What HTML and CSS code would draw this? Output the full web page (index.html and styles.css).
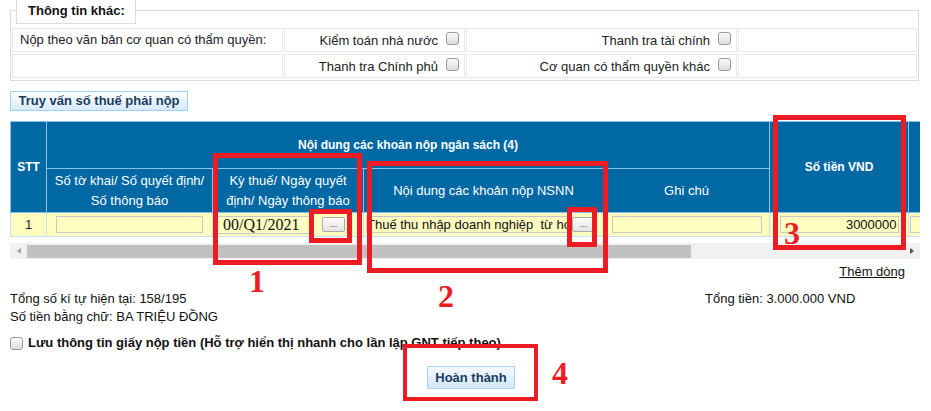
FILE: index.html
```html
<!DOCTYPE html>
<html lang="vi">
<head>
<meta charset="utf-8">
<title>Giấy nộp tiền</title>
<link rel="stylesheet" href="styles.css">
</head>
<body>
<div class="page">
  <fieldset class="info">
    <legend class="info-legend">Thông tin khác:</legend>
    <table class="info-table">
      <colgroup><col class="ic1"><col class="ic2"><col class="ic3"><col class="ic4"></colgroup>
      <tr>
        <td class="lbl">Nộp theo văn bản cơ quan có thẩm quyền:</td>
        <td class="chk">Kiểm toán nhà nước<input type="checkbox" class="cb"></td>
        <td class="chk">Thanh tra tài chính<input type="checkbox" class="cb"></td>
        <td></td>
      </tr>
      <tr>
        <td></td>
        <td class="chk">Thanh tra Chính phủ<input type="checkbox" class="cb"></td>
        <td class="chk">Cơ quan có thẩm quyền khác<input type="checkbox" class="cb"></td>
        <td></td>
      </tr>
    </table>
  </fieldset>

  <div class="query-row"><button class="btn btn-query" type="button">Truy vấn số thuế phải nộp</button></div>

  <div class="grid-wrap">
    <table class="grid">
      <colgroup>
        <col class="g-stt"><col class="g-c1"><col class="g-c2"><col class="g-c3"><col class="g-c4"><col class="g-c5"><col class="g-c6">
      </colgroup>
      <thead>
        <tr class="h1">
          <th rowspan="2" class="bold">STT</th>
          <th colspan="4" class="bold">Nội dung các khoản nộp ngân sách (4)</th>
          <th rowspan="2" class="bold">Số tiền VND</th>
          <th rowspan="2"></th>
        </tr>
        <tr class="h2">
          <th>Số tờ khai/ Số quyết định/<br>Số thông báo</th>
          <th>Kỳ thuế/ Ngày quyết<br>định/ Ngày thông báo</th>
          <th>Nội dung các khoản nộp NSNN</th>
          <th>Ghi chú</th>
        </tr>
      </thead>
      <tbody>
        <tr class="data">
          <td class="num">1</td>
          <td class="center"><input class="fld fld-c1" type="text" value=""></td>
          <td class="left-c2"><input class="fld fld-c2" type="text" value="00/Q1/2021"><button class="dots dots-c2" type="button">...</button></td>
          <td class="left-c3"><input class="fld fld-c3" type="text" value="Thuế thu nhập doanh nghiệp  từ hoạt động sản xuất kinh doanh"><button class="dots" type="button">...</button></td>
          <td class="center"><input class="fld fld-c4" type="text" value=""></td>
          <td class="center"><input class="fld fld-c5" type="text" value="3000000"></td>
          <td class="left-c6"><input class="fld fld-c6" type="text" value=""></td>
        </tr>
      </tbody>
    </table>
  </div>

  <div class="hscroll">
    <span class="arrow arrow-left"></span>
    <span class="thumb"></span>
    <span class="track-rest"></span>
    <span class="arrow arrow-right"></span>
  </div>

  <div class="addrow"><a class="link" href="#">Thêm dòng</a></div>

  <div class="summary">
    <div>
      <div>Tổng số kí tự hiện tại: 158/195</div>
      <div>Số tiền bằng chữ: BA TRIỆU ĐỒNG</div>
    </div>
    <div>Tổng tiền: 3.000.000 VND</div>
  </div>

  <label class="save"><input type="checkbox" class="cb cb-save">Lưu thông tin giấy nộp tiền (Hỗ trợ hiển thị nhanh cho lần lập GNT tiếp theo)</label>

  <div class="actions"><button class="btn btn-done" type="button">Hoàn thành</button></div>
</div>

<div class="mark box1"></div>
<div class="mark box1s"></div>
<div class="mark box2"></div>
<div class="mark box2s"></div>
<div class="mark box3"></div>
<div class="mark box4"></div>
<div class="mark-num n1">1</div>
<div class="mark-num n2">2</div>
<div class="mark-num n3">3</div>
<div class="mark-num n4">4</div>
</body>
</html>
```

FILE: styles.css
```css
* { box-sizing: border-box; }
html, body { margin: 0; padding: 0; background: #fff; }
body {
  position: relative;
  width: 931px;
  height: 411px;
  overflow: hidden;
  font-family: "Liberation Sans", Arial, sans-serif;
  font-size: 13px;
  line-height: 16px;
  color: #111;
}
.page { padding: 0 10px; }

/* ---------- Thông tin khác ---------- */
.info {
  width: 909px;
  min-width: 0;
  margin: -3px 0 0;
  padding: 2px 0 0;
  border: 1px solid #dcdcdc;
}
.info-legend {
  margin-left: 5px;
  padding: 5px 10px 5px 11px;
  border: 1px solid #dcdcdc;
  font-weight: bold;
  font-size: 13px;
  line-height: 15px;
  color: #111;
}
.info-table {
  width: 907px;
  table-layout: fixed;
  border-collapse: separate;
  border-spacing: 1px 2px;
}
.ic1 { width: 271px; }
.ic2 { width: 181px; }
.ic3 { width: 271px; }
.ic4 { width: 179px; }
.info-table td {
  height: 24px;
  padding: 0 5px 0 7px;
  border: 1px solid #e8e8e8;
  color: #222;
  white-space: nowrap;
}
.info-table .chk { text-align: right; }

.cb {
  -webkit-appearance: none;
  appearance: none;
  display: inline-block;
  width: 13px;
  height: 13px;
  margin: 0 0 0 8px;
  border: 1px solid #9a9a9a;
  border-radius: 3px;
  background: linear-gradient(#fbfbfb, #dcdcdc);
  vertical-align: baseline;
}

/* ---------- buttons ---------- */
.query-row { margin-top: 10px; }
.btn {
  font-family: "Liberation Sans", Arial, sans-serif;
  font-weight: bold;
  font-size: 13px;
  color: #1c3d60;
  border: 1px solid #9fd0f6;
  background: linear-gradient(#ffffff, #d6eafb);
  border-radius: 0;
  margin: 0;
  text-align: center;
  white-space: nowrap;
}
.btn-query { width: 178px; height: 20px; padding: 0; line-height: 18px; }
.btn-done { width: 88px; height: 23px; padding: 0; line-height: 21px; border-color: #a9d4f5; background: linear-gradient(#f4faff, #d3e8fa); }

/* ---------- main grid ---------- */
.grid-wrap {
  width: 910px;
  margin-top: 10px;
  overflow: hidden;
}
.grid {
  width: 1048px;
  table-layout: fixed;
  border-collapse: collapse;
}
.g-stt { width: 36px; }
.g-c1 { width: 166px; }
.g-c2 { width: 151px; }
.g-c3 { width: 240px; }
.g-c4 { width: 166px; }
.g-c5 { width: 139px; }
.g-c6 { width: 150px; }
.grid th {
  background: #0068a3;
  color: #fff;
  border: 1px solid #86c2ec;
  padding: 0 4px;
  font-weight: normal;
  font-size: 13px;
  line-height: 20px;
  text-align: center;
  vertical-align: middle;
}
.grid th.bold { font-weight: bold; font-size: 12px; }
.grid .h1 { height: 47px; }
.grid .h2 { height: 44px; }
.grid .data { height: 24px; }
.grid td {
  background: #fffcbf;
  border: 1px solid #c6e0f2;
  padding: 0;
  vertical-align: middle;
  white-space: nowrap;
  overflow: hidden;
}
.grid td.num { text-align: center; color: #222; }
.grid td.center { text-align: center; }
.grid td.left-c2 { padding-left: 4px; }
.grid td.left-c3 { padding-left: 2px; }
.grid td.left-c6 { padding-left: 1px; }

.fld {
  height: 17px;
  margin: 0;
  padding: 0 1px;
  border: 1px solid #c8c8c8;
  background: #fffcbf;
  font-family: "Liberation Sans", Arial, sans-serif;
  font-size: 13px;
  color: #111;
  vertical-align: middle;
  outline: none;
}
.fld-c1 { width: 147px; }
.fld-c2 { width: 93px; height: 18px; padding-left: 5px; font-family: "Liberation Serif", "Times New Roman", serif; font-size: 16px; }
.fld-c3 { width: 206px; padding-left: 0; }
.fld-c4 { width: 150px; }
.fld-c5 { width: 119px; text-align: right; }
.fld-c6 { width: 150px; }

.dots {
  width: 23px;
  height: 15px;
  margin: 0;
  padding: 0;
  border: 1px solid #ababab;
  border-radius: 2px;
  background: linear-gradient(#fdfdfd, #e2e2e2);
  font-family: "Liberation Sans", Arial, sans-serif;
  font-size: 9px;
  line-height: 13px;
  color: #444;
  vertical-align: middle;
}
.dots-c2 { margin-left: 12px; }

/* ---------- fake horizontal scrollbar ---------- */
.hscroll {
  display: flex;
  width: 910px;
  height: 16px;
  margin-top: 6px;
  background: #f1f1f1;
}
.arrow {
  width: 17px;
  height: 16px;
  display: flex;
  align-items: center;
  justify-content: center;
}
.arrow::before {
  content: "";
  border-style: solid;
}
.arrow-left::before {
  border-width: 3.5px 4px 3.5px 0;
  border-color: transparent #a3a3a3 transparent transparent;
}
.arrow-right::before {
  border-width: 3.5px 0 3.5px 4px;
  border-color: transparent transparent transparent #505050;
}
.thumb {
  width: 664px;
  height: 13px;
  margin-top: 2px;
  background: #c1c1c1;
}
.track-rest { flex: 1; }

/* ---------- footer ---------- */
.addrow {
  width: 910px;
  margin-top: 5px;
  padding-right: 15px;
  text-align: right;
  line-height: 16px;
}
.link { color: #111; text-decoration: underline; }

.summary {
  display: grid;
  grid-template-columns: 695px auto;
  margin-top: 10px;
  line-height: 18px;
  color: #111;
}
.save {
  display: flex;
  align-items: center;
  margin-top: 8px;
  line-height: 18px;
  font-weight: bold;
  color: #111;
}
.cb-save { margin: 0 5px 0 0; }

.actions {
  display: flex;
  justify-content: center;
  width: 910px;
  margin-top: 14px;
  padding-left: 12px;
}

/* ---------- red annotations (overlay) ---------- */
.mark {
  position: absolute;
  border: 5px solid #ed1c24;
}
.box1 { left: 213px; top: 153px; width: 149px; height: 112px; }
.box1s { left: 309px; top: 209px; width: 43px; height: 34px; }
.box2 { left: 367px; top: 161px; width: 241px; height: 112px; }
.box2s { left: 567px; top: 207px; width: 30px; height: 40px; }
.box3 { left: 773px; top: 115px; width: 133px; height: 135px; }
.box4 { left: 403px; top: 344px; width: 135px; height: 57px; border-width: 4px; }
.mark-num {
  position: absolute;
  font-family: "Liberation Serif", "Times New Roman", serif;
  font-weight: bold;
  font-size: 32px;
  line-height: 32px;
  color: #ed1c24;
}
.n1 { left: 249px; top: 265px; }
.n2 { left: 438px; top: 280px; }
.n3 { left: 784px; top: 217px; }
.n4 { left: 552px; top: 357px; }
```
